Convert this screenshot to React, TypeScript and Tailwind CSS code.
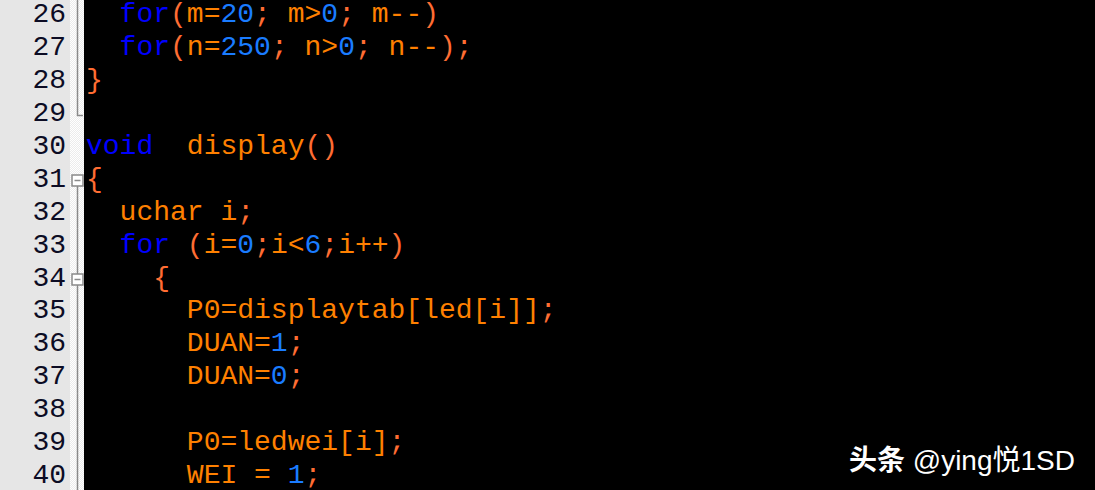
import React from "react";

const lines: { n: number; text: string; fold: "line" | "end" | "none" | "open" | "box" }[] = [
  { n: 26, text: "  for(m=20; m>0; m--)", fold: "line" },
  { n: 27, text: "  for(n=250; n>0; n--);", fold: "line" },
  { n: 28, text: "}", fold: "line" },
  { n: 29, text: "", fold: "end" },
  { n: 30, text: "void  display()", fold: "none" },
  { n: 31, text: "{", fold: "open" },
  { n: 32, text: "  uchar i;", fold: "line" },
  { n: 33, text: "  for (i=0;i<6;i++)", fold: "line" },
  { n: 34, text: "    {", fold: "box" },
  { n: 35, text: "      P0=displaytab[led[i]];", fold: "line" },
  { n: 36, text: "      DUAN=1;", fold: "line" },
  { n: 37, text: "      DUAN=0;", fold: "line" },
  { n: 38, text: "", fold: "line" },
  { n: 39, text: "      P0=ledwei[i];", fold: "line" },
  { n: 40, text: "      WEI = 1;", fold: "line" },
];

const keywords = ["for", "void"];

function tokenize(text: string) {
  const out: { t: string; c: string }[] = [];
  const re = /([A-Za-z_][A-Za-z0-9_]*)|(\d+)|([(){};])|(\s+)|(.)/g;
  let m: RegExpExecArray | null;
  while ((m = re.exec(text))) {
    if (m[1]) out.push({ t: m[1], c: keywords.includes(m[1]) ? "text-[#0000ff]" : "text-[#ff8000]" });
    else if (m[2]) out.push({ t: m[2], c: "text-[#1a7cff]" });
    else if (m[3]) out.push({ t: m[3], c: "text-[#ff6d33]" });
    else if (m[4]) out.push({ t: m[4], c: "" });
    else out.push({ t: m[5], c: "text-[#ff8000]" });
  }
  return out;
}

function Fold({ kind }: { kind: string }) {
  const stroke = "#8a8a8a";
  return (
    <svg width="14" height="32.9" viewBox="0 0 14 32.9" className="block">
      {kind === "line" && <line x1="7.5" y1="0" x2="7.5" y2="32.9" stroke={stroke} strokeWidth="1.5" />}
      {kind === "end" && <path d="M7.5 0 V17.5 H13" fill="none" stroke={stroke} strokeWidth="1.5" />}
      {kind === "open" && (
        <>
          <line x1="7.5" y1="23" x2="7.5" y2="32.9" stroke={stroke} strokeWidth="1.5" />
          <rect x="2" y="12" width="11" height="11" fill="#fff" stroke={stroke} strokeWidth="1.5" />
          <line x1="4.5" y1="17.5" x2="10.5" y2="17.5" stroke={stroke} strokeWidth="1.5" />
        </>
      )}
      {kind === "box" && (
        <>
          <line x1="7.5" y1="0" x2="7.5" y2="32.9" stroke={stroke} strokeWidth="1.5" />
          <rect x="2" y="12" width="11" height="11" fill="#fff" stroke={stroke} strokeWidth="1.5" />
          <line x1="4.5" y1="17.5" x2="10.5" y2="17.5" stroke={stroke} strokeWidth="1.5" />
        </>
      )}
    </svg>
  );
}

export default function App() {
  return (
    <div className="relative h-[490px] w-[1095px] overflow-hidden bg-black">
      <div className="flex h-full">
        <div className="w-[70px] shrink-0 bg-[#e6e6e6]" />
        <div className="w-[14px] shrink-0 bg-[repeating-conic-gradient(#ececec_0_25%,#ffffff_0_50%)] bg-[length:2px_2px]" />
        <div className="flex-1 bg-black" />
      </div>

      <div className="absolute inset-x-0 top-[-1px] font-['Liberation_Mono','Courier_New',monospace] text-[28px]">
        {lines.map((l) => (
          <div key={l.n} className="flex h-[32.9px] items-center">
            <div className="w-[70px] shrink-0 pr-[4px] text-right leading-none text-[#0c0c24]">{l.n}</div>
            <div className="w-[14px] shrink-0">
              <Fold kind={l.fold} />
            </div>
            <pre className="pl-[2px] font-['Liberation_Mono','Courier_New',monospace] leading-none whitespace-pre">
              {tokenize(l.text).map((tk, i) => (
                <span key={i} className={tk.c}>
                  {tk.t}
                </span>
              ))}
            </pre>
          </div>
        ))}
      </div>

      <div className="absolute right-[20px] top-[444px] font-['Liberation_Sans','Noto_Sans_CJK_SC',sans-serif] text-[28px] leading-none text-white [text-shadow:0_0_3px_rgba(0,0,0,0.6)]">
        <span className="font-['Noto_Sans_CJK_SC',sans-serif] font-bold">头条</span>{" "}
        @ying<span className="font-['Noto_Sans_CJK_SC',sans-serif]">悦</span>1SD
      </div>
    </div>
  );
}
